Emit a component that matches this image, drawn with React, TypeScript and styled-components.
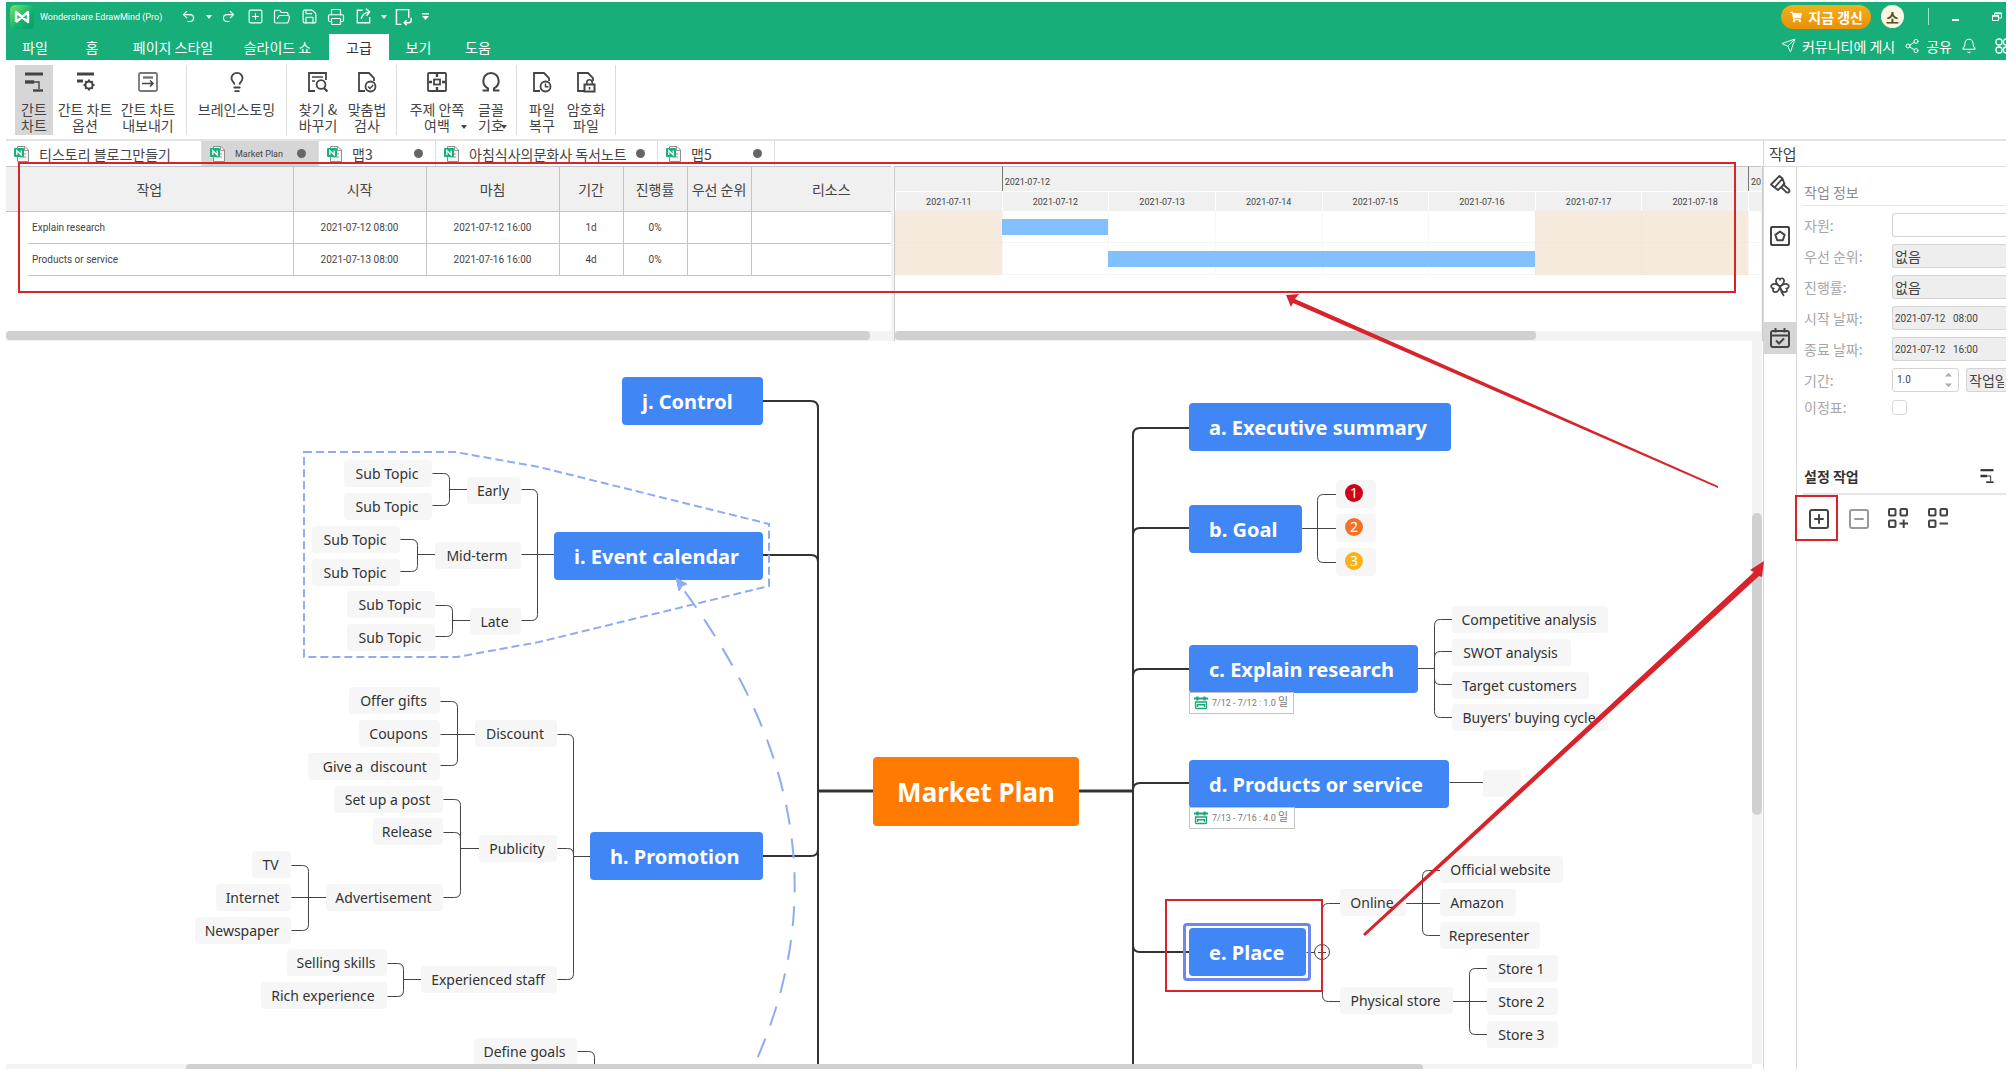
import React from 'react';
import styled, { createGlobalStyle, css } from 'styled-components';
import { Undo2, Redo2, SquarePlus, FolderOpen, Save, Printer, Send, Share2, Bell, SquareMinus, Lightbulb } from 'lucide-react';
import { FaShoppingCart } from 'react-icons/fa';

const GREEN = '#17ae79';
const RED = '#d8232a';
const UI = '"Noto Sans CJK KR", sans-serif';
const SMALL = 'Roboto, "Noto Sans CJK KR", sans-serif';
const MAP = '"Noto Sans", "Open Sans", sans-serif';

const Global = createGlobalStyle`
  *, *::before, *::after { box-sizing: border-box; }
  body { margin: 0; background: #fff; color: #444; font: 14px/16px ${UI}; }
  button, input, select { font: inherit; color: inherit; margin: 0; }
  button { border: 0; padding: 0; background: none; }
  svg { display: block; flex: none; }
`;

const Page = styled.div`
  position: relative;
  display: flex;
  flex-direction: column;
  height: 100vh;
  padding: 2px 10px 3px 6px;
  overflow: hidden;
`;

/* ---------- title bar and menu ---------- */
const Header = styled.header`
  flex: none;
  background: ${GREEN};
  color: #fff;
  overflow: hidden;
`;
const TitleBar = styled.div`
  display: flex;
  align-items: center;
  height: 29px;
  padding-left: 4px;
`;
const Logo = styled.div`
  display: grid;
  place-items: center;
  width: 24px;
  height: 24px;
  border-radius: 5px;
  background: linear-gradient(135deg, #7be36a, #0db06f 60%, #08a06a);
`;
const AppName = styled.span`
  width: 145px;
  padding-left: 6px;
  font-family: ${SMALL};
  font-size: 9px;
  white-space: nowrap;
`;
const QuickTools = styled.div`
  display: flex;
  align-items: center;
  gap: 9px;
`;
const QuickButton = styled.button<{ $w?: number }>`
  display: grid;
  place-items: center;
  width: ${(p) => p.$w ?? 18}px;
  height: 20px;
`;
const WindowTools = styled.div`
  display: flex;
  align-items: center;
  margin-left: auto;
`;
const Renew = styled.button`
  display: flex;
  align-items: center;
  gap: 6px;
  height: 24px;
  padding: 0 8px 0 9px;
  border-radius: 12px;
  background: linear-gradient(#f3b01c, #ea8f06);
  font-weight: 700;
  white-space: nowrap;
`;
const Avatar = styled.button`
  width: 23px;
  height: 23px;
  margin: 0 24px 0 10px;
  border-radius: 50%;
  background: #fdf6e3;
  color: #5b4a2e;
  font-weight: 700;
`;
const Divider = styled.i`
  width: 1px;
  height: 17px;
  margin-right: 22px;
  background: #a5dfc8;
`;
const MenuBar = styled.nav`
  display: flex;
  align-items: stretch;
  height: 29px;
`;
const MenuItem = styled.button<{ $w: number; $on?: boolean }>`
  width: ${(p) => p.$w}px;
  margin-top: 3px;
  white-space: nowrap;
  ${(p) => p.$on && css`background: #fff; color: #333;`}
`;
const MenuRight = styled.div`
  display: flex;
  align-items: center;
  gap: 9px;
  margin-left: auto;
`;
const MenuLink = styled.button`
  display: flex;
  align-items: center;
  gap: 6px;
  white-space: nowrap;
`;

/* ---------- ribbon ---------- */
const Ribbon = styled.div`
  display: flex;
  flex: none;
  height: 81px;
  padding: 5px 0 0 9px;
  border-bottom: 2px solid #e3e3e3;
`;
const RibbonGroup = styled.div<{ $l?: number; $r?: number }>`
  display: flex;
  height: 70px;
  padding: 0 ${(p) => p.$r ?? 0}px 0 ${(p) => p.$l ?? 0}px;
  border-right: 1px solid #dcdcdc;
`;
const RibbonButton = styled.button<{ $w: number; $on?: boolean }>`
  display: flex;
  flex-direction: column;
  align-items: center;
  gap: 8px;
  width: ${(p) => p.$w}px;
  padding-top: 6px;
  background: ${(p) => (p.$on ? '#d6d6d6' : 'transparent')};
  white-space: pre;
`;
const Caption = styled.span`
  display: flex;
  align-items: flex-end;
  svg {
    margin: 0 -3px 4px;
  }
`;

/* ---------- document tabs ---------- */
const Body = styled.div`
  display: flex;
  flex: 1;
  min-height: 0;
`;
const Main = styled.main`
  display: flex;
  flex: 1;
  flex-direction: column;
  min-width: 0;
`;
const Tabs = styled.div`
  display: flex;
  flex: none;
  height: 25px;
`;
const Tab = styled.button<{ $w: number; $on?: boolean }>`
  display: flex;
  align-items: center;
  gap: 9px;
  width: ${(p) => p.$w}px;
  padding: 0 12px 0 8px;
  border-right: 1px solid #e0e0e0;
  background: ${(p) => (p.$on ? '#d6d6d6' : '#fff')};
  font-family: ${(p) => (p.$on ? SMALL : UI)};
  font-size: ${(p) => (p.$on ? 9 : 14)}px;
  white-space: nowrap;
`;
const Dot = styled.i`
  flex: none;
  width: 9px;
  height: 9px;
  margin-left: auto;
  border-radius: 50%;
  background: #666;
`;

/* ---------- gantt ---------- */
const Gantt = styled.section`
  display: grid;
  flex: none;
  grid-template-columns: minmax(0, 885fr) 4px minmax(0, 866fr) 2px;
  height: 175px;
`;
const Pane = styled.div`
  display: flex;
  flex-direction: column;
  min-width: 0;
  overflow: hidden;
`;
const Splitter = styled.div`
  border-right: 1px solid #ccc;
  background: #f3f3f3;
`;
const Fill = styled.div`
  flex: 1;
`;
const HTrack = styled.div`
  height: 10px;
  background: #f3f3f3;
`;
const HThumb = styled.div<{ $w: number }>`
  width: ${(p) => p.$w}%;
  height: 9px;
  border-radius: 4px;
  background: #d0d0d0;
`;
const TaskTable = styled.table`
  width: 100%;
  border-collapse: collapse;
  table-layout: fixed;
  th {
    height: 45px;
    padding: 0;
    border: 1px solid #c4c4c4;
    border-left: 0;
    background: #f0f0f0;
    font-weight: 400;
  }
  td {
    height: 32px;
    padding: 0;
    border-right: 1px solid #c4c4c4;
    border-bottom: 1px solid #c4c4c4;
    font-family: ${SMALL};
    font-size: 10px;
    text-align: center;
  }
  th:last-child, td:last-child { border-right: 0; }
  th:last-child { padding-left: 20px; }
  td:first-child { border: 0; }
  td:nth-child(2) { padding-left: 4px; text-align: left; }
`;
const Days = styled.div<{ $h: number }>`
  display: grid;
  grid-template-columns: repeat(8, minmax(0, 1fr)) 13px;
  height: ${(p) => p.$h}px;
`;
const Week = styled.div<{ $span: number; $line?: boolean }>`
  grid-column: span ${(p) => p.$span};
  padding: 9px 0 0 2px;
  overflow: hidden;
  border-top: 1px solid #c4c4c4;
  border-left: ${(p) => (p.$line ? '1px solid #777' : '0')};
  background: #f0f0f0;
  font-family: ${SMALL};
  font-size: 9px;
  line-height: 12px;
  white-space: nowrap;
`;
const DayHead = styled.div`
  border-top: 1px solid #fff;
  border-left: 1px solid #fff;
  background: #f0f0f0;
  font-family: ${SMALL};
  font-size: 9px;
  line-height: 20px;
  text-align: center;
`;
const DayCell = styled.div<{ $off?: boolean; $col: number }>`
  grid-row: 1;
  grid-column: ${(p) => p.$col};
  border-left: 1px solid ${(p) => (p.$off ? '#f3e7d9' : '#f7f7f7')};
  border-bottom: 1px solid ${(p) => (p.$off ? '#f3e7d9' : '#f5f5f5')};
  background: ${(p) => (p.$off ? '#f6eadc' : '#fff')};
`;
const TaskBar = styled.div<{ $from: number; $to: number }>`
  z-index: 1;
  grid-row: 1;
  grid-column: ${(p) => p.$from} / ${(p) => p.$to};
  height: 16px;
  margin-top: 8px;
  background: #82bfff;
`;

/* ---------- mind map ---------- */
const ORIGIN = { x: 6, y: 341 };
const CanvasRow = styled.section`
  display: flex;
  flex: 1;
  min-height: 0;
`;
const Canvas = styled.div`
  position: relative;
  flex: 1;
  overflow: hidden;
  font-family: ${MAP};
`;
const Wires = styled.svg`
  position: absolute;
  top: -${ORIGIN.y}px;
  left: -${ORIGIN.x}px;
  overflow: visible;
`;
const VTrack = styled.div`
  width: 10px;
  margin-right: 1px;
  padding-top: 172px;
  background: #f3f3f3;
`;
const VThumb = styled.div`
  height: 302px;
  border-radius: 5px;
  background: #d0d0d0;
`;
const BottomTrack = styled.div`
  flex: none;
  height: 5px;
  margin-right: 11px;
  padding-left: 180px;
  background: #f3f3f3;
`;
const BottomThumb = styled.div`
  width: 79%;
  height: 5px;
  border-radius: 4px 4px 0 0;
  background: #d0d0d0;
`;
type Box = { $x: number; $y: number; $w: number };
const place = css<Box>`
  position: absolute;
  left: ${(p) => p.$x - ORIGIN.x}px;
  top: ${(p) => p.$y - ORIGIN.y}px;
  width: ${(p) => p.$w}px;
`;
const Leaf = styled.div<Box>`
  ${place}
  height: 27px;
  padding: 1px 2px 0 0;
  border-radius: 4px;
  background: #f6f6f6;
  color: #333;
  font-size: 14px;
  line-height: 26px;
  text-align: center;
  white-space: pre;
`;
const Topic = styled.div<Box>`
  ${place}
  height: 48px;
  padding-left: 20px;
  border-radius: 4px;
  background: #4086f4;
  color: #fff;
  font-size: 20px;
  font-weight: 700;
  line-height: 50px;
  white-space: nowrap;
`;
const Root = styled.div<Box>`
  ${place}
  height: 69px;
  border-radius: 4px;
  background: #ff7a00;
  color: #fff;
  font-size: 26px;
  font-weight: 700;
  line-height: 70px;
  text-align: center;
`;
const Selection = styled.div<Box>`
  ${place}
  height: 58px;
  border: 3px solid #6f86f0;
  border-radius: 4px;
`;
const Priority = styled.div<Box>`
  ${place}
  height: 28px;
  padding: 4px 0 0 9px;
  border-radius: 4px;
  background: #f6f6f6;
`;
const Badge = styled.span<{ $c: string }>`
  display: block;
  width: 18px;
  height: 18px;
  border-radius: 50%;
  background: ${(p) => p.$c};
  color: #fff;
  font-size: 14px;
  line-height: 18px;
  text-align: center;
`;
const TaskTag = styled.div<Box>`
  ${place}
  display: flex;
  align-items: center;
  gap: 4px;
  height: 22px;
  padding-left: 4px;
  border: 1px solid #c4c4c4;
  background: #fff;
  color: #777;
  font: 9px/20px ${SMALL};
  white-space: nowrap;
`;
const Unit = styled.span`
  font-size: 11px;
`;

/* ---------- side panel ---------- */
const Side = styled.aside`
  display: flex;
  flex: none;
  flex-direction: column;
  width: 243px;
  border-left: 1px solid #d6d6d6;
`;
const SideTitle = styled.h2`
  margin: 0;
  padding-left: 5px;
  border-bottom: 1px solid #dcdcdc;
  font-size: 15px;
  font-weight: 400;
  line-height: 25px;
`;
const SideBody = styled.div`
  display: flex;
  flex: 1;
`;
const Rail = styled.div`
  display: flex;
  flex: none;
  flex-direction: column;
  gap: 19px;
  width: 33px;
  padding-top: 2px;
  border-right: 1px solid #d6d6d6;
`;
const RailButton = styled.button<{ $on?: boolean }>`
  display: grid;
  place-items: center;
  height: 32px;
  background: ${(p) => (p.$on ? '#d6d6d6' : 'transparent')};
`;
const Details = styled.form`
  flex: 1;
  min-width: 0;
  padding-left: 6px;
  overflow: hidden;
`;
const SectionTitle = styled.h3<{ $strong?: boolean }>`
  display: flex;
  align-items: center;
  justify-content: space-between;
  margin: 0;
  padding: ${(p) => (p.$strong ? '53px 11px 9px 1px' : '17px 0 5px 1px')};
  border-bottom: ${(p) => (p.$strong ? 2 : 1)}px solid #e6e6e6;
  color: ${(p) => (p.$strong ? '#333' : '#8c8c8c')};
  font-size: 14px;
  font-weight: ${(p) => (p.$strong ? 700 : 400)};
  line-height: 16px;
`;
const Fields = styled.div`
  display: flex;
  flex-direction: column;
  gap: 7px;
  padding-top: 7px;
`;
const Field = styled.div<{ $short?: boolean }>`
  display: flex;
  align-items: center;
  height: ${(p) => (p.$short ? 16 : 24)}px;
`;
const Label = styled.label`
  width: 89px;
  padding-left: 1px;
  color: #a6a6a6;
`;
const control = css`
  height: 24px;
  padding: 0 2px;
  border: 1px solid #d4d4d4;
  border-radius: 3px;
`;
const wide = css`
  flex: 1;
  min-width: 0;
  border-right: 0;
  border-radius: 3px 0 0 3px;
`;
const TextBox = styled.input<{ $off?: boolean }>`
  ${control}
  ${wide}
  background: ${(p) => (p.$off ? '#eee' : '#fff')};
  font-family: ${SMALL};
  font-size: ${(p) => (p.$off ? 10 : 14)}px;
  white-space: pre;
`;
const Choice = styled.select`
  ${control}
  ${wide}
  appearance: none;
  background: #eee;
`;
const Spinner = styled.div`
  ${control}
  display: flex;
  align-items: center;
  justify-content: space-between;
  width: 67px;
  margin-right: 7px;
  padding-right: 6px;
`;
const SpinInput = styled.input`
  width: 40px;
  border: 0;
  padding: 0 2px;
  background: none;
  font-family: ${SMALL};
  font-size: 10px;
`;
const Check = styled.input`
  appearance: none;
  width: 15px;
  height: 15px;
  margin: 0;
  border: 1px solid #d8d8d8;
  border-radius: 3px;
`;
const TaskActions = styled.div`
  display: flex;
  gap: 19px;
  padding: 12px 0 0 4px;
`;
const Tool = styled.button<{ $dim?: boolean }>`
  display: grid;
  place-items: center;
  width: 21px;
  height: 21px;
  color: ${(p) => (p.$dim ? '#999' : '#444')};
`;
const Annotations = styled.svg`
  position: absolute;
  inset: 0;
  width: 100%;
  height: 100%;
  pointer-events: none;
`;

/* ---------- icons ---------- */
type IconProps = { size?: number; children: React.ReactNode };
const Ico = ({ size = 22, children }: IconProps) => (
  <svg width={size} height={size} viewBox="0 0 22 22" fill="none" stroke="currentColor" strokeWidth="1.8">{children}</svg>
);
const Caret = () => (
  <svg width="6" height="4" viewBox="0 0 6 4"><path d="M0 0h6L3 4z" fill="currentColor" /></svg>
);
const GanttIcon = ({ size }: { size?: number }) => (
  <Ico size={size}><path d="M2 3h18" strokeWidth="3" /><path d="M2 11h9" strokeWidth="3.4" /><path d="M11 11h5v7" strokeWidth="1.4" /><path d="M10 19.5h10" strokeWidth="2.4" /></Ico>
);
const Gear = () => (
  <Ico><path d="M3 3h17" strokeWidth="3" /><path d="M3 10h6" strokeWidth="3" /><circle cx="15" cy="14" r="3.6" strokeWidth="2" /><path d="M15 8.5v2M15 17.5v2M9.5 14h2M18.5 14h2M11.2 10.2l1.3 1.3M17.5 16.5l1.3 1.3M11.2 17.8l1.3-1.3M17.5 11.5l1.3-1.3" strokeWidth="2" /></Ico>
);
const ExportGantt = () => (
  <Ico><rect x="2" y="2" width="18" height="18" rx="1.5" stroke="#777" /><path d="M6 6.5h10" stroke="#777" strokeWidth="2.4" /><path d="M5 12.5h11M13 9.5l3 3-3 3" strokeWidth="1.6" /></Ico>
);
const FindIcon = () => (
  <Ico><path d="M8 20H2V2h17v7" /><path d="M5 6h11M5 10h3" strokeWidth="1.4" /><circle cx="14" cy="13.5" r="4.4" /><path d="M17 17l3.5 3.5" strokeWidth="2.2" /></Ico>
);
const page = 'M9 20H3V2h10l5 5v3';
const SpellIcon = () => (
  <Ico><path d={page} /><circle cx="14.5" cy="15.5" r="5" /><path d="M12 15.5l2 2 3.2-3.5" strokeWidth="1.5" /></Ico>
);
const RecoverIcon = () => (
  <Ico><path d={page} /><circle cx="14.5" cy="15.5" r="5" /><path d="M14.5 12.5v3.3h3" strokeWidth="1.5" /></Ico>
);
const LockIcon = () => (
  <Ico><path d={page} /><rect x="9.5" y="13.5" width="10" height="7" strokeWidth="2" /><path d="M11.8 13v-1.5a2.7 2.7 0 015.4 0V13M14.5 16v2.5" strokeWidth="1.6" /></Ico>
);
const MarginIcon = () => (
  <Ico><rect x="2" y="2" width="18" height="18" rx="1" /><rect x="8" y="8.5" width="6" height="5" /><path d="M11 3v3M11 16v3M3 11h3M16 11h3" strokeWidth="2.4" /></Ico>
);
const OmegaIcon = () => (
  <Ico><path d="M2.5 19.5H8v-2.2C4.800 15.500 3.300 13 3.300 9.900 3.300 5.400 6.600 2 11 2s7.700 3.400 7.700 7.900c0 3.100-1.500 5.600-4.700 7.400v2.200h5.500" strokeWidth="2" /></Ico>
);
const DocIcon = () => (
  <svg width="16" height="18" viewBox="0 0 16 18"><path d="M3.500 1.500h7.500l3.500 3.500v11.500h-11z" fill="#f4f4f4" stroke="#8f8f8f" /><path d="M10.500 2v3.500H14M12 9h-2M12 12H6" fill="none" stroke="#9a9a9a" /><rect x="0" y="3" width="10" height="9" rx="1" fill="#16b07c" /><path d="M2.800 10V5.500L7.200 10V5.500" fill="none" stroke="#fff" strokeWidth="1.300" /></svg>
);
const BrushIcon = () => (
  <Ico><path d="M2 10.500L10.500 2l3 2.500-8 9zM2 10.500l7 5.500 6.500-6-2-5.500M13.500 10l6 5c1 .9 1.300 2.200.5 3s-2.200.700-3-.2L12 13" strokeLinejoin="round" /></Ico>
);
const StarIcon = () => (
  <Ico><rect x="2" y="2" width="18" height="18" rx="1" strokeWidth="2" /><path d="M11 6.500l4.600 3.400-1.800 5.300H8.200L6.400 9.900z" strokeWidth="2" strokeLinejoin="round" /></Ico>
);
const CloverIcon = () => (
  <Ico><path d="M11 10.500C8 8.500 6.500 6.800 7 4.300 7.500 2 10 1.500 11 3.500 12 1.500 14.500 2 15 4.300c.5 2.500-1 4.200-4 6.200zM11 10.500c-.8 3.500-2 5.500-4.500 5.700-2.300 0-3.200-2-2-3.600-2.300-.3-3-2.600-1.400-4 2-1.800 4.700-.4 7.900 1.900zM11 10.500c.8 3.500 2 5.500 4.500 5.700 2.300 0 3.200-2 2-3.600 2.300-.3 3-2.600 1.400-4-2-1.800-4.700-.4-7.900 1.900zM11 10.500c.5 4 1.500 6.500 4 9.500" strokeWidth="1.700" /></Ico>
);
const CalendarIcon = () => (
  <Ico><rect x="2" y="4" width="18" height="16" rx="2" strokeWidth="2" /><path d="M2 8.500h18M6.500 1v4.500M15.500 1v4.500M7 13.500l3 3 5-5" strokeWidth="2" /></Ico>
);
const Squares = ({ plus }: { plus?: boolean }) => (
  <Ico><rect x="2" y="2" width="6.500" height="6.500" rx="1" strokeWidth="2" /><rect x="13.500" y="2" width="6.500" height="6.500" rx="1" strokeWidth="2" /><rect x="2" y="13.500" width="6.500" height="6.500" rx="1" strokeWidth="2" /><path d={plus ? 'M12.500 16.500h8.500M16.700 12.500v8.500' : 'M12.500 16.500h8.500'} strokeWidth="2" /></Ico>
);
const TagIcon = () => (
  <svg width="14" height="14" viewBox="0 0 14 14" fill="none" stroke="#16a777" strokeWidth="1.800"><path d="M0 2.500h14M3.500.500v4M10.500.500v4" strokeWidth="2.200" /><path d="M1.500 5.500v6a1 1 0 001 1h9a1 1 0 001-1v-6M1 6h12" strokeWidth="1.300" /><path d="M3.500 11V8.800h7V11" strokeWidth="1.500" /></svg>
);

/* ---------- data ---------- */
const days = ['2021-07-11', '2021-07-12', '2021-07-13', '2021-07-14', '2021-07-15', '2021-07-16', '2021-07-17', '2021-07-18'];
const tasks = [
  { name: 'Explain research', start: '2021-07-12 08:00', end: '2021-07-12 16:00', len: '1d', from: 2, to: 3 },
  { name: 'Products or service', start: '2021-07-13 08:00', end: '2021-07-16 16:00', len: '4d', from: 3, to: 7 },
];
const topics: [string, number, number, number][] = [
  ['j. Control', 622, 377, 141], ['i. Event calendar', 554, 532, 209], ['h. Promotion', 590, 832, 173],
  ['a. Executive summary', 1189, 403, 262], ['b. Goal', 1189, 505, 113], ['c. Explain research', 1189, 645, 229],
  ['d. Products or service', 1189, 760, 260], ['e. Place', 1189, 928, 117],
];
const leaves: [string, number, number, number][] = [
  ['Sub Topic', 344, 460, 88], ['Sub Topic', 344, 493, 88], ['Sub Topic', 312, 526, 88], ['Sub Topic', 312, 559, 88],
  ['Sub Topic', 347, 591, 88], ['Sub Topic', 347, 624, 88], ['Early', 467, 477, 54], ['Mid-term', 435, 542, 86], ['Late', 470, 608, 51],
  ['Offer gifts', 349, 687, 91], ['Coupons', 359, 720, 81], [' Give a  discount', 308, 753, 132], ['Set up a post', 334, 786, 109],
  ['Release', 373, 818, 70], ['TV', 252, 851, 39], ['Internet', 216, 884, 75], ['Advertisement', 326, 884, 117], ['Newspaper', 195, 917, 96],
  ['Selling skills', 287, 949, 100], ['Rich experience', 261, 982, 126], ['Discount', 475, 720, 82], ['Publicity', 479, 835, 78],
  ['Experienced staff', 421, 966, 136], ['Define goals', 474, 1038, 103],
  ['Competitive analysis', 1452, 606, 156], ['SWOT analysis', 1452, 639, 119], ['Target customers', 1452, 672, 137], ["Buyers' buying cycle", 1452, 704, 156],
  ['', 1483, 770, 38], ['Online', 1340, 889, 66], ['Official website', 1440, 856, 123], ['Amazon', 1440, 889, 76], ['Representer', 1440, 922, 100],
  ['Physical store', 1340, 987, 113], ['Store 1', 1487, 955, 71], ['Store 2', 1487, 988, 71], ['Store 3', 1487, 1021, 71],
];
// parent x, parent y, trunk x, child x, child y values
const forks: [number, number, number, number, number[]][] = [
  [554, 554, 537, 521, [489, 554, 620]], [467, 489, 449, 432, [473, 505]], [435, 554, 417, 400, [539, 571]], [470, 620, 452, 435, [605, 636]],
  [475, 734, 457, 440, [701, 734, 765]], [479, 848, 460, 443, [799, 832, 897]], [326, 897, 308, 291, [865, 897, 930]],
  [590, 856, 573, 557, [734, 848, 979]], [421, 979, 403, 387, [963, 996]], [594, 1080, 594, 577, [1051]],
  [1302, 528, 1317, 1336, [494, 528, 562]], [1418, 668, 1434, 1452, [619, 651, 684, 717]], [1449, 782, 1460, 1483, [782]],
  [1322, 952, 1322, 1340, [903, 1001]], [1406, 903, 1422, 1440, [870, 903, 935]], [1452, 1001, 1469, 1487, [968, 1001, 1034]], [1306, 952, 1310, 1315, [952]],
];
const bend = (px: number, py: number, tx: number, cx: number, cy: number, r: number) => {
  if (cy === py) return `M${px} ${py}H${cx}`;
  const v = cy > py ? 1 : -1;
  const h = cx > tx ? 1 : -1;
  return `M${px} ${py}H${tx}V${cy - v * r}Q${tx} ${cy} ${tx + h * r} ${cy}H${cx}`;
};

const Spacer = styled.i<{ $w: number }>`width: ${(p) => p.$w}px;`;

export default function App() {
  return (
    <Page>
      <Global />
      <Header>
        <TitleBar>
          <Logo><svg width="16" height="14" viewBox="0 0 16 14" fill="none" stroke="#fff" strokeWidth="2.400" strokeLinejoin="round"><path d="M2 12V2l12 10V2L2 12" /></svg></Logo>
          <AppName>Wondershare EdrawMind (Pro)</AppName>
          <QuickTools>
            <QuickButton aria-label="실행 취소"><Undo2 size={15} strokeWidth={1.8} /></QuickButton>
            <QuickButton $w={4} aria-label="취소 목록"><Caret /></QuickButton>
            <QuickButton aria-label="다시 실행"><Redo2 size={15} strokeWidth={1.8} /></QuickButton>
            <QuickButton aria-label="새로 만들기"><SquarePlus size={17} strokeWidth={1.6} /></QuickButton>
            <QuickButton aria-label="열기"><FolderOpen size={18} strokeWidth={1.6} /></QuickButton>
            <QuickButton aria-label="저장"><Save size={17} strokeWidth={1.6} /></QuickButton>
            <QuickButton aria-label="인쇄"><Printer size={18} strokeWidth={1.6} /></QuickButton>
            <QuickButton aria-label="내보내기"><Ico size={17}><path d="M10 3H3v16h16v-7M8 14c1-5 4-8 11-9M14 1l5 4-4 5" /></Ico></QuickButton>
            <QuickButton $w={4} aria-label="내보내기 목록"><Caret /></QuickButton>
            <QuickButton aria-label="페이지"><Ico size={18}><path d="M9 20H3V2h15v10M21 12v3c0 2-1 3-3 3h-5M15.500 15l-3 3 3 3" /></Ico></QuickButton>
            <QuickButton $w={8} aria-label="더 보기"><svg width="7" height="7" viewBox="0 0 7 7"><path d="M0 0h7v1.500H0zM0 3h7L3.500 7z" fill="#fff" /></svg></QuickButton>
          </QuickTools>
          <WindowTools>
            <Renew><FaShoppingCart size={12} />지금 갱신</Renew>
            <Avatar>소</Avatar>
            <Divider />
            <QuickButton $w={8} aria-label="최소화"><svg width="7" height="8" viewBox="0 0 7 8"><path d="M0 7h7" stroke="#fff" strokeWidth="2" /></svg></QuickButton>
            <Spacer $w={29} />
            <QuickButton aria-label="이전 크기로"><svg width="10" height="9" viewBox="0 0 10 9" fill="none" stroke="#fff"><path d="M.5 3.500h6v5h-6zM2.500 3V1h7v5H7" /><path d="M.5 4h6M3 1.500h6.500" strokeWidth="1.600" /></svg></QuickButton>
          </WindowTools>
        </TitleBar>
        <MenuBar>
          <MenuItem $w={58}>파일</MenuItem>
          <MenuItem $w={56}>홈</MenuItem>
          <MenuItem $w={106}>페이지 스타일</MenuItem>
          <MenuItem $w={103}>슬라이드 쇼</MenuItem>
          <MenuItem $w={60} $on>고급</MenuItem>
          <MenuItem $w={59}>보기</MenuItem>
          <MenuItem $w={60}>도움</MenuItem>
          <MenuRight>
            <MenuLink><Send size={15} strokeWidth={1.5} />커뮤니티에 게시</MenuLink>
            <MenuLink><Share2 size={16} strokeWidth={1.5} />공유</MenuLink>
            <MenuLink aria-label="알림"><Bell size={16} strokeWidth={1.6} /></MenuLink>
            <Spacer $w={0} />
            <MenuLink aria-label="앱"><svg width="11" height="16" viewBox="0 0 11 16" fill="none" stroke="#fff" strokeWidth="1.300"><rect x="1" y="1" width="6" height="6" rx="2.500" /><rect x="1" y="9" width="6" height="6" rx="2.500" /><rect x="8.500" y="1" width="6" height="6" rx="2.500" /><rect x="8.500" y="9" width="6" height="6" rx="2.500" /></svg></MenuLink>
          </MenuRight>
        </MenuBar>
      </Header>

      <Ribbon>
        <RibbonGroup $r={7}>
          <RibbonButton $w={38} $on><GanttIcon />{'간트\n차트'}</RibbonButton>
          <RibbonButton $w={64}><Gear />{'간트 차트\n옵션'}</RibbonButton>
          <RibbonButton $w={62}><ExportGantt />{'간트 차트\n내보내기'}</RibbonButton>
        </RibbonGroup>
        <RibbonGroup>
          <RibbonButton $w={99}><Lightbulb size={22} strokeWidth={2} />브레인스토밍</RibbonButton>
        </RibbonGroup>
        <RibbonGroup $l={5} $r={6}>
          <RibbonButton $w={52}><FindIcon />{'찾기 &\n바꾸기'}</RibbonButton>
          <RibbonButton $w={46}><SpellIcon />{'맞춤법\n검사'}</RibbonButton>
        </RibbonGroup>
        <RibbonGroup $l={9} $r={2}>
          <RibbonButton $w={62}><MarginIcon /><Caption>{'주제 안쪽\n여백'}<Caret /></Caption></RibbonButton>
          <RibbonButton $w={46}><OmegaIcon /><Caption>{'글꼴\n기호'}<Caret /></Caption></RibbonButton>
        </RibbonGroup>
        <RibbonGroup $l={3} $r={7}>
          <RibbonButton $w={44}><RecoverIcon />{'파일\n복구'}</RibbonButton>
          <RibbonButton $w={44}><LockIcon />{'암호화\n파일'}</RibbonButton>
        </RibbonGroup>
      </Ribbon>

      <Body>
        <Main>
          <Tabs>
            <Tab $w={196}><DocIcon />티스토리 블로그만들기</Tab>
            <Tab $w={117} $on><DocIcon />Market Plan<Dot /></Tab>
            <Tab $w={117}><DocIcon />맵3<Dot /></Tab>
            <Tab $w={222}><DocIcon />아침식사의문화사 독서노트<Dot /></Tab>
            <Tab $w={117}><DocIcon />맵5<Dot /></Tab>
          </Tabs>
          <Gantt>
            <Pane>
              <TaskTable>
                <colgroup><col width="22" /><col width="265" /><col width="133" /><col width="133" /><col width="64" /><col width="64" /><col width="64" /><col /></colgroup>
                <thead>
                  <tr><th colSpan={2}>작업</th><th>시작</th><th>마침</th><th>기간</th><th>진행률</th><th>우선 순위</th><th>리소스</th></tr>
                </thead>
                <tbody>
                  {tasks.map((t) => (
                    <tr key={t.name}><td /><td>{t.name}</td><td>{t.start}</td><td>{t.end}</td><td>{t.len}</td><td>0%</td><td /><td /></tr>
                  ))}
                </tbody>
              </TaskTable>
              <Fill />
              <HTrack><HThumb $w={97.6} /></HTrack>
            </Pane>
            <Splitter />
            <Pane>
              <Days $h={25}>
                <Week $span={1} />
                <Week $span={7} $line>2021-07-12</Week>
                <Week $span={1} $line>202</Week>
              </Days>
              <Days $h={20}>
                {days.map((d) => <DayHead key={d}>{d}</DayHead>)}
                <DayHead />
              </Days>
              {tasks.map((t) => (
                <Days key={t.name} $h={32}>
                  {[1, 2, 3, 4, 5, 6, 7, 8, 9].map((c) => <DayCell key={c} $col={c} $off={c === 1 || c === 7 || c === 8} />)}
                  <TaskBar $from={t.from} $to={t.to} />
                </Days>
              ))}
              <Fill />
              <HTrack><HThumb $w={74} /></HTrack>
            </Pane>
            <Splitter />
          </Gantt>
          <CanvasRow>
            <Canvas>
              <Wires width="1760" height="1072" fill="none">
                <g stroke="#333" strokeWidth="2">
                  <path d="M763 401H811Q818 401 818 408V1080M763 555H811Q818 555 818 562M763 856H811Q818 856 818 849" />
                  <path d="M1189 428H1140Q1133 428 1133 435V1080M1189 528H1140Q1133 528 1133 535M1189 669H1140Q1133 669 1133 676M1189 783H1140Q1133 783 1133 790M1189 952H1140Q1133 952 1133 945" />
                  <path d="M818 791H873M1079 791H1133" strokeWidth="3" />
                </g>
                <g stroke="#444" transform="translate(.5 .5)">
                  {forks.map(([px, py, tx, cx, ys]) => ys.map((y) => <path key={`${px}-${y}`} d={bend(px, py, tx, cx, y, 6)} />))}
                </g>
              </Wires>
              <Root $x={873} $y={757} $w={206}>Market Plan</Root>
              {topics.map(([t, x, y, w]) => <Topic key={t} $x={x} $y={y} $w={w}>{t}</Topic>)}
              {leaves.map(([t, x, y, w]) => <Leaf key={`${x}-${y}`} $x={x} $y={y} $w={w}>{t}</Leaf>)}
              <Priority $x={1336} $y={480} $w={40}><Badge $c="#d0021b">1</Badge></Priority>
              <Priority $x={1336} $y={514} $w={40}><Badge $c="#f5712a">2</Badge></Priority>
              <Priority $x={1336} $y={548} $w={40}><Badge $c="#fbb015">3</Badge></Priority>
              <TaskTag $x={1189} $y={692} $w={105}><TagIcon /><span>7/12 - 7/12 : 1.0 <Unit>일</Unit></span></TaskTag>
              <TaskTag $x={1189} $y={807} $w={106}><TagIcon /><span>7/13 - 7/16 : 4.0 <Unit>일</Unit></span></TaskTag>
              <Selection $x={1183} $y={923} $w={128} />
              <Wires width="1760" height="1072" fill="none">
                <path d="M304 452H455L539 467L769 524V586L539 642L457 657H304Z" stroke="#8fabf2" strokeWidth="2" strokeDasharray="8 4" />
                <path d="M680 585C780 720 840 880 752 1070" stroke="#8fabf2" strokeWidth="2" strokeDasharray="20 14" strokeDashoffset="-8" />
                <path d="M676 578l11 6-5 2-3 5z" fill="#8fabf2" stroke="#8fabf2" />
                <circle cx="1322" cy="952" r="7.500" fill="#fff" stroke="#444" /><path d="M1318 952.500h8" stroke="#444" />
              </Wires>
            </Canvas>
            <VTrack><VThumb /></VTrack>
          </CanvasRow>
          <BottomTrack><BottomThumb /></BottomTrack>
        </Main>

        <Side>
          <SideTitle>작업</SideTitle>
          <SideBody>
            <Rail>
              <RailButton aria-label="스타일"><BrushIcon /></RailButton>
              <RailButton aria-label="아이콘"><StarIcon /></RailButton>
              <RailButton aria-label="클립아트"><CloverIcon /></RailButton>
              <RailButton aria-label="작업" $on><CalendarIcon /></RailButton>
            </Rail>
            <Details>
              <SectionTitle>작업 정보</SectionTitle>
              <Fields>
                <Field><Label htmlFor="res">자원:</Label><TextBox id="res" /></Field>
                <Field><Label htmlFor="pri">우선 순위:</Label><Choice id="pri"><option>없음</option></Choice></Field>
                <Field><Label htmlFor="pro">진행률:</Label><Choice id="pro"><option>없음</option></Choice></Field>
                <Field><Label htmlFor="beg">시작 날짜:</Label><TextBox id="beg" $off defaultValue="2021-07-12   08:00" /></Field>
                <Field><Label htmlFor="end">종료 날짜:</Label><TextBox id="end" $off defaultValue="2021-07-12   16:00" /></Field>
                <Field>
                  <Label htmlFor="len">기간:</Label>
                  <Spinner><SpinInput id="len" defaultValue="1.0" /><svg width="7" height="14" viewBox="0 0 7 14" fill="#aaa"><path d="M0 3.500h7L3.500 0zM0 10.500h7L3.500 14z" /></svg></Spinner>
                  <Choice aria-label="기간 단위"><option>작업일</option></Choice>
                </Field>
                <Field $short><Label htmlFor="mil">이정표:</Label><Check id="mil" type="checkbox" /></Field>
              </Fields>
              <SectionTitle $strong>설정 작업<GanttIcon size={16} /></SectionTitle>
              <TaskActions>
                <Tool type="button" aria-label="작업 추가"><SquarePlus size={24} strokeWidth={2} /></Tool>
                <Tool type="button" $dim aria-label="작업 삭제"><SquareMinus size={24} strokeWidth={2} /></Tool>
                <Tool type="button" aria-label="모두 추가"><Squares plus /></Tool>
                <Tool type="button" aria-label="모두 삭제"><Squares /></Tool>
              </TaskActions>
            </Details>
          </SideBody>
        </Side>
      </Body>

      <Annotations fill="none" stroke={RED}>
        <rect x="19" y="163" width="1716" height="129" strokeWidth="2" />
        <rect x="1166" y="900" width="156" height="91" strokeWidth="2" />
        <rect x="1796" y="496" width="41" height="44" strokeWidth="2" />
        <g fill={RED} stroke="none">
          <path d="M1718 486L1295 299L1299 294L1286 295L1291 307L1293 303L1718 488Z" />
          <path d="M1363 934L1754 572L1750 570L1764 561L1762 577L1759 576L1365 936Z" />
        </g>
      </Annotations>
    </Page>
  );
}
